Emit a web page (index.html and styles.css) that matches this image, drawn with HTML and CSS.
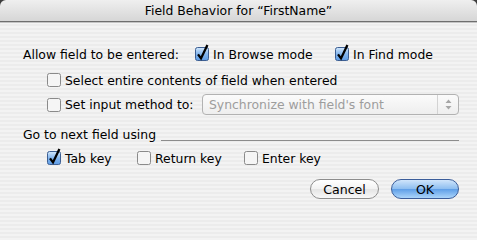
FILE: index.html
```html
<!DOCTYPE html>
<html>
<head>
<meta charset="utf-8">
<link rel="stylesheet" href="styles.css">
</head>
<body>
<div class="window">
  <div class="frame-top"><div class="titlebar">Field Behavior for “FirstName”</div></div>
  <div class="content">
    <div class="row row1">
      <span class="lead">Allow field to be entered:</span>
      <label class="check w140"><svg class="cb on" width="14" height="14" viewBox="0 0 14 14"><defs><linearGradient id="bl" x1="0" y1="0" x2="0" y2="1"><stop offset="0" stop-color="#d3e8fc"/><stop offset="0.5" stop-color="#84b6ee"/><stop offset="1" stop-color="#5d9ce6"/></linearGradient></defs><rect x="0.5" y="0.5" width="13" height="13" rx="2"/><path d="M3 7.4 L6 11.4 L12.4 -2"/></svg>In Browse mode</label>
      <label class="check"><svg class="cb on" width="14" height="14" viewBox="0 0 14 14"><rect x="0.5" y="0.5" width="13" height="13" rx="2"/><path d="M3 7.4 L6 11.4 L12.4 -2"/></svg>In Find mode</label>
    </div>
    <div class="row row2 indent">
      <label class="check"><svg class="cb" width="14" height="14" viewBox="0 0 14 14"><rect x="0.5" y="0.5" width="13" height="13" rx="2"/></svg>Select entire contents of field when entered</label>
    </div>
    <div class="row row3 indent">
      <label class="check w155"><svg class="cb" width="14" height="14" viewBox="0 0 14 14"><rect x="0.5" y="0.5" width="13" height="13" rx="2"/></svg>Set input method to:</label>
      <div class="popup">
        <span class="popup-text">Synchronize with field's font</span>
        <span class="popup-arrows"><svg width="7" height="11" viewBox="0 0 7 11"><path d="M3.5 0.5 L6.5 4 L0.5 4 Z M3.5 10.5 L6.5 7 L0.5 7 Z"/></svg></span>
      </div>
    </div>
    <div class="row heading">
      <span>Go to next field using</span>
      <span class="rule"></span>
    </div>
    <div class="row keys indent">
      <label class="check w90"><svg class="cb on" width="14" height="14" viewBox="0 0 14 14"><rect x="0.5" y="0.5" width="13" height="13" rx="2"/><path d="M3 7.4 L6 11.4 L12.4 -2"/></svg>Tab key</label>
      <label class="check w107"><svg class="cb" width="14" height="14" viewBox="0 0 14 14"><rect x="0.5" y="0.5" width="13" height="13" rx="2"/></svg>Return key</label>
      <label class="check"><svg class="cb" width="14" height="14" viewBox="0 0 14 14"><rect x="0.5" y="0.5" width="13" height="13" rx="2"/></svg>Enter key</label>
    </div>
    <div class="buttons">
      <button class="btn cancel">Cancel</button>
      <button class="btn ok">OK</button>
    </div>
  </div>
</div>
</body>
</html>
```
FILE: styles.css
```css
html, body {
  margin: 0;
  padding: 0;
  background: repeating-linear-gradient(to bottom, #ececec 0 2px, #f3f3f3 2px 4px);
}
body {
  font-family: "DejaVu Sans", sans-serif;
  font-size: 12.4px;
  color: #000;
}
.window {
  width: 477px;
  height: 216px;
  display: flex;
  flex-direction: column;
}
.frame-top {
  background: #3c3c3c;
  flex: none;
}
.titlebar {
  height: 21px;
  line-height: 22px;
  text-align: center;
  background: linear-gradient(to bottom, #efefef, #d6d6d6);
  border-bottom: 1px solid #6e6e6e;
  border-radius: 6px 6px 0 0;
}
.content {
  border-top: 1px solid #c4c4c4;
  padding: 20px 18px 0 23px;
  display: flex;
  flex-direction: column;
}
.row {
  display: flex;
  align-items: center;
  height: 20px;
}
.indent { padding-left: 24px; }
.row1 { padding-top: 1px; }
.row2 { margin-top: 6px; }
.row3 { margin-top: 4px; height: 21px; }
.heading { margin-top: 9px; }
.keys { margin-top: 4px; }
.lead { width: 172px; flex: none; }
.check {
  display: flex;
  align-items: center;
  flex: none;
}
.w140 { width: 140px; }
.w155 { width: 155px; }
.w90 { width: 90px; }
.w107 { width: 107px; }
.cb {
  margin-right: 4px;
  overflow: visible;
  flex: none;
}
.cb rect {
  fill: #f5f5f5;
  stroke: #8a8a8a;
  stroke-width: 1;
}
.cb.on rect {
  fill: url(#bl);
  stroke: #3d5f93;
}
.cb path {
  fill: none;
  stroke: #000;
  stroke-width: 2.3;
  stroke-linecap: butt;
  stroke-linejoin: miter;
}
.popup {
  width: 259px;
  height: 21px;
  box-sizing: border-box;
  border: 1px solid #b2b2b2;
  border-radius: 4px;
  background: linear-gradient(to bottom, #fbfbfb, #eeeeee);
  display: flex;
  align-items: center;
}
.popup-text {
  flex: 1;
  padding-left: 6px;
  color: #9d9d9d;
}
.popup-arrows {
  width: 20px;
  height: 19px;
  border-left: 1px solid #d3d3d3;
  display: flex;
  align-items: center;
  justify-content: center;
}
.popup-arrows path { fill: #a6a6a6; }
.rule {
  flex: 1;
  height: 1px;
  background: #8c8c8c;
  margin: 12px 0 0 5px;
}
.buttons {
  display: flex;
  justify-content: flex-end;
  gap: 12px;
  margin-top: 11px;
}
.btn {
  height: 20px;
  font-family: "DejaVu Sans", sans-serif;
  font-size: 12.6px;
  border-radius: 10px;
  padding: 0;
  color: #000;
}
.cancel {
  width: 69px;
  border: 1px solid #8d8d8d;
  background: linear-gradient(to bottom, #ffffff 0%, #f2f2f2 50%, #e4e4e4 51%, #f8f8f8 100%);
}
.ok {
  width: 68px;
  border: 1px solid #3b5d9a;
  background: linear-gradient(to bottom, #cfe5fb 0%, #8cbdf0 50%, #5e9ee7 51%, #acd5fa 100%);
}
```
